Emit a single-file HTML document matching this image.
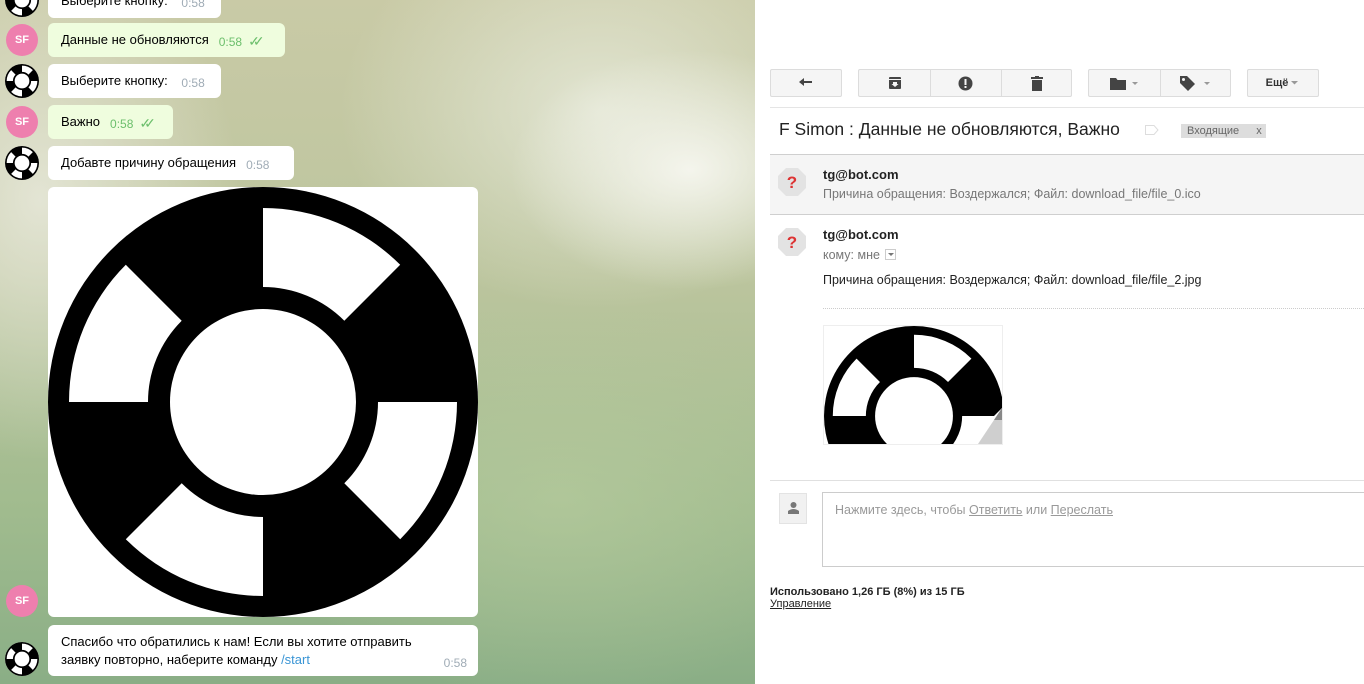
<!DOCTYPE html>
<html><head><meta charset="utf-8">
<style>
*{margin:0;padding:0;box-sizing:border-box}
body{width:1364px;height:684px;overflow:hidden;position:relative;font-family:"Liberation Sans",Arial,sans-serif;background:#fff}
#left{position:absolute;left:0;top:0;width:755px;height:684px;overflow:hidden;
background:
radial-gradient(ellipse 180px 120px at 690px 170px,rgba(250,250,245,.85),rgba(250,250,245,0)),
radial-gradient(ellipse 260px 200px at 600px 110px,rgba(235,238,225,.75),rgba(235,238,225,0)),
radial-gradient(ellipse 200px 260px at 40px 200px,rgba(236,236,225,.8),rgba(236,236,225,0)),
radial-gradient(ellipse 300px 200px at 560px 500px,rgba(185,205,160,.6),rgba(185,205,160,0)),
linear-gradient(180deg,#c9caa6 0%,#bcc59e 40%,#a0bb8e 75%,#8aae86 100%)}
.b{position:absolute;background:#fff;border-radius:6px;font-size:13px;color:#000;padding:0 13px;line-height:33px}
.g{background:#effdde}
.t{color:#a0acb6;font-size:12px;margin-left:10px;position:relative;top:2px}
.g .t{color:#6cbf6c}
.ck{color:#6cbf6c;font-size:14px;margin-left:6px;letter-spacing:-7px;position:relative;top:2px}
.sf{position:absolute;width:32px;height:32px;border-radius:50%;background:#ee7fae;color:#fff;font-size:11px;font-weight:bold;text-align:center;line-height:32px}
.av{position:absolute;width:34px;height:34px}
.btn{position:absolute;top:69px;height:28px;background:#f5f5f5;border:1px solid #dcdcdc;border-radius:2px}
.ic{position:absolute;top:0;height:26px;display:flex;align-items:center;justify-content:center}
.sep{position:absolute;top:0;width:1px;height:26px;background:#dcdcdc}
.gr{color:#777}
</style></head><body>
<svg width="0" height="0" style="position:absolute">
<defs>
<symbol id="ring" viewBox="0 0 430 430">
<circle cx="215" cy="215" r="215" fill="#000"/>
<g fill="#fff">
<path id="seg" d="M215 21 A194 194 0 0 1 352.2 77.8 L296.3 133.7 A115 115 0 0 0 215 100 Z"/>
<use href="#seg" transform="rotate(90 215 215)"/>
<use href="#seg" transform="rotate(180 215 215)"/>
<use href="#seg" transform="rotate(270 215 215)"/>
</g>
<circle cx="215" cy="215" r="93" fill="#fff"/>
</symbol>
</defs></svg>

<div id="left">
  <svg class="av" style="left:5px;top:-17px" viewBox="0 0 430 430"><circle cx="215" cy="215" r="215" fill="#fff"/><use href="#ring"/></svg>
  <div class="b" style="left:48px;top:-16px;width:173px">Выберите кнопку: <span class="t">0:58</span></div>

  <div class="sf" style="left:6px;top:24px">SF</div>
  <div class="b g" style="left:48px;top:23px;width:237px">Данные не обновляются<span class="t">0:58</span><span class="ck">✓✓</span></div>

  <svg class="av" style="left:5px;top:64px" viewBox="0 0 430 430"><circle cx="215" cy="215" r="215" fill="#fff"/><use href="#ring"/></svg>
  <div class="b" style="left:48px;top:64px;width:173px">Выберите кнопку: <span class="t">0:58</span></div>

  <div class="sf" style="left:6px;top:106px">SF</div>
  <div class="b g" style="left:48px;top:105px;width:125px">Важно<span class="t">0:58</span><span class="ck">✓✓</span></div>

  <svg class="av" style="left:5px;top:146px" viewBox="0 0 430 430"><circle cx="215" cy="215" r="215" fill="#fff"/><use href="#ring"/></svg>
  <div class="b" style="left:48px;top:146px;width:246px">Добавте причину обращения<span class="t">0:58</span></div>

  <div style="position:absolute;left:48px;top:187px;width:430px;height:430px;background:#fff;border-radius:6px;overflow:hidden">
    <svg width="430" height="430"><use href="#ring"/></svg>
  </div>
  <div class="sf" style="left:6px;top:585px">SF</div>

  <svg class="av" style="left:5px;top:642px" viewBox="0 0 430 430"><circle cx="215" cy="215" r="215" fill="#fff"/><use href="#ring"/></svg>
  <div class="b" style="left:48px;top:625px;width:430px;height:51px;line-height:18px;padding-top:8px">Спасибо что обратились к нам! Если вы хотите отправить<br>заявку повторно, наберите команду <span style="color:#3a95d5">/start</span><span class="t" style="position:absolute;right:11px;bottom:4px;top:auto">0:58</span></div>
</div>

<!-- Gmail -->
<div class="btn" style="left:770px;width:72px"><div class="ic" style="left:0;width:70px"><svg width="14" height="10" viewBox="0 0 14 10"><path d="M5 0 L0 4 L5 8 V5 H13 V3 H5 Z" fill="#444"/></svg></div></div>
<div class="btn" style="left:858px;width:214px">
  <div class="ic" style="left:0;width:71px"><svg width="14" height="14" viewBox="0 0 14 14"><rect x="1" y="1" width="12" height="12" rx="1" fill="#444"/><rect x="1" y="3" width="12" height="1" fill="#f5f5f5"/><path d="M5 6 H9 V8 H10.5 L7 11 L3.5 8 H5 Z" fill="#f5f5f5"/></svg></div>
  <div class="sep" style="left:71px"></div>
  <div class="ic" style="left:71px;width:71px"><svg width="15" height="15" viewBox="0 0 15 15"><circle cx="7.5" cy="7.5" r="7" fill="#444"/><rect x="6.5" y="3" width="2" height="6" fill="#f5f5f5"/><rect x="6.5" y="10" width="2" height="2" fill="#f5f5f5"/></svg></div>
  <div class="sep" style="left:142px"></div>
  <div class="ic" style="left:142px;width:71px"><svg width="12" height="15" viewBox="0 0 12 15"><rect x="0" y="1" width="12" height="2" fill="#444"/><rect x="4" y="0" width="4" height="2" fill="#444"/><rect x="1" y="4" width="10" height="11" fill="#444"/></svg></div>
</div>
<div class="btn" style="left:1088px;width:143px">
  <div class="ic" style="left:0;width:71px"><svg width="30" height="13" viewBox="0 0 30 13"><path d="M0 1 H6 L7.5 3 H16 V13 H0 Z" fill="#444"/><path d="M22 5 H28 L25 8 Z" fill="#999"/></svg></div>
  <div class="sep" style="left:71px"></div>
  <div class="ic" style="left:71px;width:71px"><svg width="32" height="15" viewBox="0 0 32 15"><path d="M0 0 H7 L15 8 L8 15 L0 7 Z" fill="#444"/><circle cx="3.5" cy="3.5" r="1.5" fill="#f5f5f5"/><path d="M24 6 H30 L27 9 Z" fill="#999"/></svg></div>
</div>
<div class="btn" style="left:1247px;width:72px"><div class="ic" style="left:0;width:70px;font-size:11px;font-weight:bold;color:#333">Ещё<svg width="10" height="6" viewBox="0 0 10 6" style="margin-left:2px"><path d="M1 1 H8 L4.5 4.5 Z" fill="#999"/></svg></div></div>

<div style="position:absolute;left:770px;top:107px;width:594px;height:1px;background:#e5e5e5"></div>
<div style="position:absolute;left:779px;top:119px;font-size:17.5px;color:#222">F Simon : Данные не обновляются, Важно</div>
<svg style="position:absolute;left:1145px;top:125px" width="14" height="10" viewBox="0 0 14 10"><path d="M0.5 0.5 H9 L13 5 L9 9.5 H0.5 Z" fill="none" stroke="#ddd"/></svg>
<div style="position:absolute;left:1181px;top:124px;width:85px;height:14px;background:#ddd;font-size:11px;color:#666;line-height:14px;padding-left:6px">Входящие <span style="margin-left:14px">x</span></div>

<div style="position:absolute;left:770px;top:154px;width:594px;height:61px;background:#f5f5f5;border-top:1px solid #cfcfcf;border-bottom:1px solid #cfcfcf"></div>
<svg style="position:absolute;left:777px;top:167px" width="30" height="30" viewBox="0 0 30 30"><path d="M9 1 H21 L29 9 V21 L21 29 H9 L1 21 V9 Z" fill="#e3e3e3"/><text x="15" y="21" text-anchor="middle" font-family="Liberation Sans" font-weight="bold" font-size="17" fill="#dd3333">?</text></svg>
<div style="position:absolute;left:823px;top:167px;font-size:13px;font-weight:bold;color:#222">tg@bot.com</div>
<div class="gr" style="position:absolute;left:823px;top:187px;font-size:12.5px">Причина обращения: Воздержался; Файл: download_file/file_0.ico</div>

<svg style="position:absolute;left:777px;top:227px" width="30" height="30" viewBox="0 0 30 30"><path d="M9 1 H21 L29 9 V21 L21 29 H9 L1 21 V9 Z" fill="#e3e3e3"/><text x="15" y="21" text-anchor="middle" font-family="Liberation Sans" font-weight="bold" font-size="17" fill="#dd3333">?</text></svg>
<div style="position:absolute;left:823px;top:227px;font-size:13px;font-weight:bold;color:#222">tg@bot.com</div>
<div class="gr" style="position:absolute;left:823px;top:248px;font-size:12.5px">кому: мне <span style="display:inline-block;width:11px;height:11px;border:1px solid #ccc;vertical-align:-1px;margin-left:2px;position:relative"><span style="position:absolute;left:2px;top:3px;border-left:3px solid transparent;border-right:3px solid transparent;border-top:3px solid #777"></span></span></div>
<div style="position:absolute;left:823px;top:273px;font-size:12.5px;color:#222">Причина обращения: Воздержался; Файл: download_file/file_2.jpg</div>
<div style="position:absolute;left:823px;top:308px;width:541px;border-top:1px dotted #ccc"></div>

<div style="position:absolute;left:823px;top:325px;width:180px;height:120px;border:1px solid #eee;overflow:hidden;background:#fff">
  <svg style="position:absolute;left:0;top:0" width="180" height="180" viewBox="0 0 430 430"><use href="#ring"/></svg>
  <svg style="position:absolute;right:0;bottom:0" width="36" height="36" viewBox="0 0 36 36"><path d="M36 0 L36 36 L0 36 Z" fill="#fff"/><path d="M36 0 L12 36 L36 36 Z" fill="#cfcfcf"/><path d="M36 0 L28 12 L36 12 Z" fill="#888"/></svg>
</div>

<div style="position:absolute;left:770px;top:480px;width:594px;height:1px;background:#e0e0e0"></div>
<div style="position:absolute;left:779px;top:493px;width:28px;height:31px;background:#f1f1f1;border:1px solid #e3e3e3">
  <svg style="position:absolute;left:8px;top:8px" width="11" height="12" viewBox="0 0 11 12"><circle cx="5.5" cy="3" r="3" fill="#777"/><path d="M0 12 V9 Q5.5 5 11 9 V12 Z" fill="#777"/></svg>
</div>
<div style="position:absolute;left:822px;top:492px;width:560px;height:75px;border:1px solid #ccc;font-size:12.5px;color:#999;padding:10px 0 0 12px">Нажмите здесь, чтобы <u>Ответить</u> или <u>Переслать</u></div>
<div style="position:absolute;left:770px;top:586px;font-size:11px;font-weight:bold;color:#222">Использовано 1,26 ГБ (8%) из 15 ГБ</div>
<div style="position:absolute;left:770px;top:598px;font-size:11px;color:#222;text-decoration:underline">Управление</div>
</body></html>
